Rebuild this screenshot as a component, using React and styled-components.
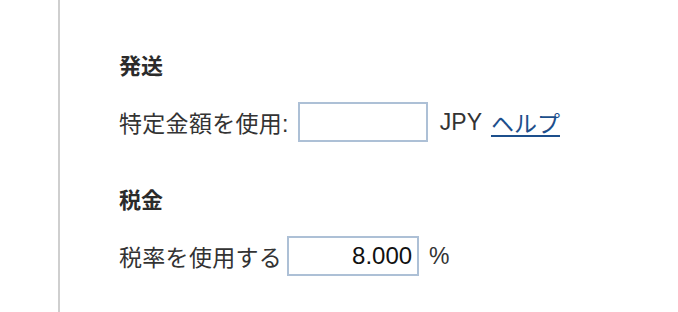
import React from 'react';
import styled, { createGlobalStyle } from 'styled-components';

const GlobalStyle = createGlobalStyle`
  html, body {
    margin: 0;
    padding: 0;
    background: #fff;
  }
  body {
    font-family: "Liberation Sans", "Noto Sans CJK JP", sans-serif;
    color: #333;
  }
`;

const Panel = styled.div`
  margin-left: 58px;
  height: 312px;
  border-left: 2px solid #cfcfcf;
  padding: 52px 0 0 59px;
  box-sizing: border-box;
  overflow: hidden;
`;

const Section = styled.section`
  margin-bottom: 44px;
`;

const Heading = styled.h3`
  margin: 0 0 20px 0;
  height: 30px;
  line-height: 30px;
  font-size: 22px;
  font-weight: bold;
  color: #2b2b2b;
`;

const Row = styled.div`
  display: flex;
  align-items: center;
  height: 40px;
  font-size: 23px;
  color: #333;
`;

const Label = styled.span`
  margin-right: ${(p) => p.gap}px;
  letter-spacing: 0.3px;
`;

const Field = styled.input`
  box-sizing: border-box;
  width: ${(p) => p.w}px;
  height: 40px;
  border: 2px solid #adc0d6;
  border-radius: 0;
  padding: 0 5px;
  font-family: "Liberation Sans", sans-serif;
  font-size: 24px;
  color: #111;
  text-align: ${(p) => (p.right ? 'right' : 'left')};
  outline: none;
  background: #fff;
`;

const Unit = styled.span`
  margin-left: ${(p) => p.gap}px;
`;

const HelpLink = styled.a`
  margin-left: 9px;
  color: #1c4f8c;
  text-decoration: underline;
  text-underline-offset: 3px;
`;

export default function App() {
  return (
    <>
      <GlobalStyle />
      <Panel>
        <Section>
          <Heading>発送</Heading>
          <Row>
            <Label gap={9}>特定金額を使用:</Label>
            <Field w={130} defaultValue="" />
            <Unit gap={12}>JPY</Unit>
            <HelpLink href="#">ヘルプ</HelpLink>
          </Row>
        </Section>
        <Section>
          <Heading>税金</Heading>
          <Row>
            <Label gap={5}>税率を使用する</Label>
            <Field w={132} right defaultValue="8.000" />
            <Unit gap={10}>%</Unit>
          </Row>
        </Section>
      </Panel>
    </>
  );
}
